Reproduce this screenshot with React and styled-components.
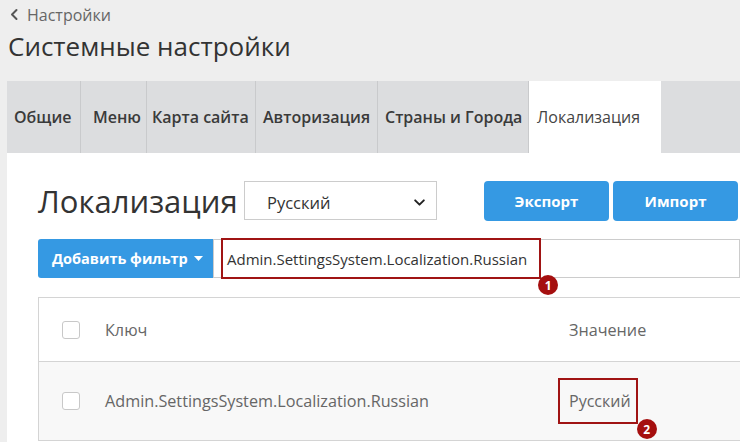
import React from "react";
import styled, { createGlobalStyle } from "styled-components";

const GlobalStyle = createGlobalStyle`
  html, body {
    margin: 0;
    padding: 0;
    background: #eeeeee;
    font-family: "Open Sans", "Noto Sans", sans-serif;
    overflow: hidden;
  }
`;

const Page = styled.div`
  padding-left: 7px;
  width: 733px;
  height: 442px;
  overflow: hidden;
`;

const Breadcrumb = styled.div`
  height: 29px;
  display: flex;
  align-items: center;
  gap: 8px;
  padding-left: 2px;
  font-size: 16px;
  color: #666;
`;

const PageTitle = styled.h1`
  margin: 0;
  padding-left: 1px;
  font-size: 26px;
  font-weight: 400;
  line-height: 34px;
  color: #333;
`;

const TabBar = styled.div`
  margin-top: 18px;
  height: 72px;
  display: flex;
  background: #dcdddf;
`;

const Tab = styled.div`
  flex: 0 0 ${(p) => p.$w}px;
  box-sizing: border-box;
  display: flex;
  align-items: center;
  padding-left: ${(p) => p.$pl}px;
  font-size: 16px;
  white-space: nowrap;
  font-weight: ${(p) => (p.$active ? 400 : 600)};
  color: ${(p) => (p.$active ? "#444" : "#3a3a3a")};
  background: ${(p) => (p.$active ? "#fff" : "transparent")};
  border-right: 1px solid ${(p) => (p.$active ? "transparent" : "#c9cacc")};
`;

const Panel = styled.div`
  background: #fff;
  height: 289px;
  padding: 27px 0 0 31px;
  box-sizing: border-box;
`;

const HeadRow = styled.div`
  display: flex;
  align-items: center;
  height: 41px;
`;

const Heading = styled.h2`
  margin: 0;
  width: 206px;
  flex: none;
  font-size: 31px;
  font-weight: 400;
  color: #333;
  line-height: 40px;
  white-space: nowrap;
`;

const Select = styled.div`
  width: 193px;
  height: 39px;
  box-sizing: border-box;
  border: 1px solid #cccccc;
  display: flex;
  align-items: center;
  justify-content: space-between;
  padding: 3px 10px 0 22px;
  font-size: 16.5px;
  color: #333;
`;

const Button = styled.button`
  height: 40px;
  width: ${(p) => p.$w}px;
  border: none;
  border-radius: 4px;
  background: #3599e3;
  color: #fff;
  font-family: inherit;
  font-size: 15px;
  font-weight: 700;
  margin-left: ${(p) => p.$ml}px;
  display: flex;
  align-items: center;
  justify-content: center;
  gap: 6px;
  padding: 0;
`;

const FilterRow = styled.div`
  display: flex;
  margin-top: 18px;
  height: 39px;
`;

const FilterButton = styled(Button)`
  height: 39px;
  border-radius: 3px 0 0 3px;
  justify-content: flex-start;
  padding-left: 14px;
  font-size: 14.5px;
`;

const SearchBox = styled.div`
  flex: 1;
  box-sizing: border-box;
  border: 1px solid #cccccc;
  display: flex;
  align-items: center;
  padding-left: 7px;
`;

const Marked = styled.div`
  position: relative;
  box-sizing: border-box;
  height: ${(p) => p.$h}px;
  display: inline-flex;
  align-items: center;
  border: 2px solid #a01414;
  padding: 0 ${(p) => p.$pr}px 0 ${(p) => p.$pl}px;
  margin-left: ${(p) => p.$ml || 0}px;
  font-size: ${(p) => p.$fs}px;
  color: ${(p) => p.$color};
`;

const Badge = styled.span`
  position: absolute;
  right: ${(p) => p.$r}px;
  bottom: ${(p) => p.$b}px;
  width: 20px;
  height: 20px;
  border-radius: 50%;
  background: #a50f0f;
  color: #fff;
  font-size: 12px;
  font-weight: 700;
  display: flex;
  align-items: center;
  justify-content: center;
`;

const Table = styled.div`
  margin-top: 19px;
  border: 1px solid #d4d4d4;
  border-right: none;
`;

const Row = styled.div`
  display: flex;
  align-items: center;
  height: ${(p) => p.$h}px;
  background: ${(p) => (p.$alt ? "#f8f8f8" : "#fff")};
  border-top: ${(p) => (p.$alt ? "1px solid #d4d4d4" : "none")};
  font-size: 16.2px;
  color: #666;
`;

const CheckCell = styled.div`
  width: 66px;
  padding-left: 23px;
  box-sizing: border-box;
  display: flex;
`;

const Checkbox = styled.span`
  width: 18px;
  height: 18px;
  box-sizing: border-box;
  border: 1px solid #c8c8c8;
  border-radius: 3px;
  background: #fff;
`;

const KeyCell = styled.div`
  width: 464px;
`;

const ValueCell = styled.div`
  flex: 1;
  display: flex;
`;

const Chevron = ({ size = 12, color = "#333", w = 2 }) => (
  <svg width={size} height={size} viewBox="0 0 12 12" fill="none">
    <path d="M2 4l4 4 4-4" stroke={color} strokeWidth={w} strokeLinecap="round" strokeLinejoin="round" />
  </svg>
);

const tabs = [
  { label: "Общие", w: 74, pl: 7 },
  { label: "Меню", w: 66, pl: 12 },
  { label: "Карта сайта", w: 109, pl: 5 },
  { label: "Авторизация", w: 122, pl: 7 },
  { label: "Страны и Города", w: 151, pl: 7 },
  { label: "Локализация", w: 132, pl: 8, active: true },
];

export default function App() {
  return (
    <Page>
      <GlobalStyle />
      <Breadcrumb>
        <svg width="10" height="13" viewBox="0 0 10 13" fill="none">
          <path d="M7.5 2L3 6.5 7.5 11" stroke="#555" strokeWidth="2" strokeLinecap="round" strokeLinejoin="round" />
        </svg>
        Настройки
      </Breadcrumb>
      <PageTitle>Системные настройки</PageTitle>
      <TabBar>
        {tabs.map((t) => (
          <Tab key={t.label} $w={t.w} $pl={t.pl} $active={t.active}>
            {t.label}
          </Tab>
        ))}
      </TabBar>
      <Panel>
        <HeadRow>
          <Heading>Локализация</Heading>
          <Select>
            Русский
            <Chevron size={13} color="#222" w={1.8} />
          </Select>
          <Button $w={125} $ml={47}>Экспорт</Button>
          <Button $w={125} $ml={4}>Импорт</Button>
        </HeadRow>
        <FilterRow>
          <FilterButton $w={175}>
            Добавить фильтр
            <svg width="9" height="5" viewBox="0 0 9 5">
              <path d="M0 0h9L4.5 5z" fill="#fff" />
            </svg>
          </FilterButton>
          <SearchBox>
            <Marked $h={41} $pl={4} $pr={12} $fs={15} $color="#333">
              Admin.SettingsSystem.Localization.Russian
              <Badge $r={-19} $b={-18}>1</Badge>
            </Marked>
          </SearchBox>
        </FilterRow>
        <Table>
          <Row $h={63}>
            <CheckCell>
              <Checkbox />
            </CheckCell>
            <KeyCell>Ключ</KeyCell>
            <ValueCell>Значение</ValueCell>
          </Row>
          <Row $h={78} $alt>
            <CheckCell>
              <Checkbox />
            </CheckCell>
            <KeyCell>Admin.SettingsSystem.Localization.Russian</KeyCell>
            <ValueCell>
              <Marked $h={46} $pl={9} $pr={5} $ml={-11} $fs={16} $color="#666">
                Русский
                <Badge $r={-21} $b={-17}>2</Badge>
              </Marked>
            </ValueCell>
          </Row>
        </Table>
      </Panel>
    </Page>
  );
}
